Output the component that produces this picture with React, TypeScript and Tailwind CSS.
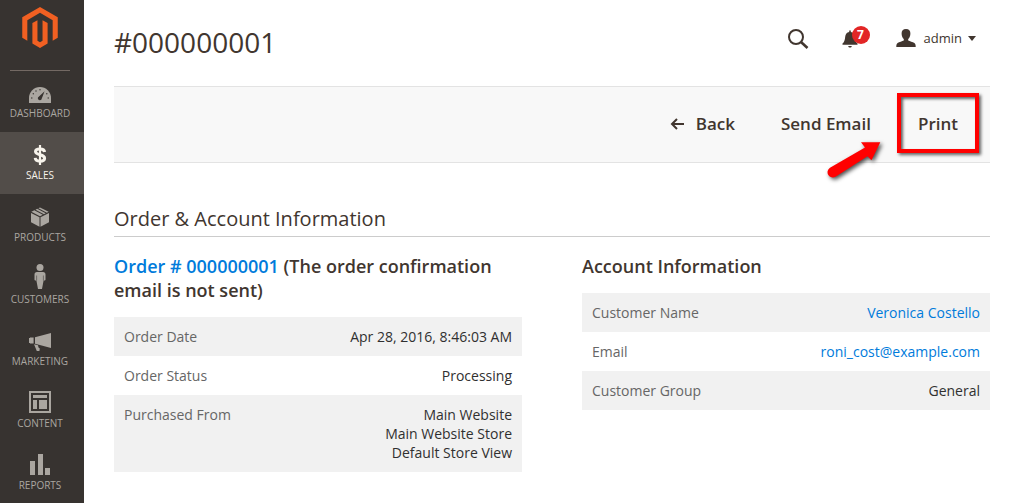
import React from 'react';
import type { ReactNode } from 'react';

interface MenuItem {
    label: string;
    icon: ReactNode;
    active?: boolean;
}

interface InfoRow {
    label: string;
    value: ReactNode;
}

const DashboardIcon = () => (
    <svg width="22" height="16" viewBox="0 0 22 16" fill="currentColor">
        <path d="M0 16V11a11 11 0 0 1 22 0v5z" />
        <g className="text-[#373330]">
            <path d="M15.600 4.200 12.800 11.400a2 2 0 1 1-2.800-1.900z" />
            <circle cx="2.800" cy="11" r="0.700" />
            <circle cx="4.300" cy="6.800" r="0.700" />
            <circle cx="7" cy="4" r="0.700" />
            <circle cx="11" cy="2.800" r="0.700" />
            <circle cx="17.800" cy="6.800" r="0.700" />
            <circle cx="19.200" cy="11" r="0.700" />
        </g>
    </svg>
);

const SalesIcon = () => (
    <svg width="14" height="20" viewBox="0 0 14 20" fill="none" stroke="currentColor">
        <path
            d="M11.600 7C11.400 4.900 9.800 3.900 7 3.900S2.500 4.900 2.500 6.600C2.500 8.600 4.500 9.200 7 9.800s4.600 1.300 4.600 3.500c0 1.800-1.700 2.900-4.600 2.900s-4.600-1.200-4.800-3.300"
            strokeWidth="3"
        />
        <path d="M7 0v20" strokeWidth="2.200" />
    </svg>
);

const ProductsIcon = () => (
    <svg width="20" height="20" viewBox="0 0 20 20" fill="currentColor">
        <path d="M1 5.900 9.500 10.200V19.800L1 15.200z" />
        <path d="M19 5.900 10.500 10.200V19.800L19 15.200z" />
        <path d="M1.400 4.800 4.300 3.300 12.800 7.800 10 9.200z" />
        <path d="M5.500 2.700 7.200 1.800 15.700 6.300 14 7.200z" />
        <path d="M8.400 1.200 10 .4 18.600 4.800 16.900 5.700z" />
    </svg>
);

const CustomersIcon = () => (
    <svg width="12" height="25" viewBox="0 0 12 25" fill="currentColor">
        <circle cx="6" cy="3.500" r="3.500" />
        <path d="M3 8h6c1.600 0 2.500 1 2.500 2.500V15.500c0 .7-.5 1-1.200 1H9.600L8 25H4L2.400 16.500H1.700C1 16.500.5 16.200.5 15.500v-5C.5 9 1.400 8 3 8z" />
        <path d="M2.600 11.500v5M9.400 11.500v5" stroke="#373330" strokeWidth="0.500" />
    </svg>
);

const MarketingIcon = () => (
    <svg width="22" height="18" viewBox="0 0 22 18" fill="currentColor">
        <path d="M22 0v15L6 10.800V4.300z" />
        <path d="M0 5h1V4.400h3.600v6.200H1V10H0z" />
        <path d="M5 11.200 9 12.300l.5 2.200 1.300 1-.4 2.500H7.800z" />
    </svg>
);

const ContentIcon = () => (
    <svg width="22" height="22" viewBox="0 0 22 22" fill="currentColor">
        <path d="M0 0h22v22H0zM2 2v18h18V2z" fillRule="evenodd" />
        <path d="M4 4h14v3H4zM4 9h4v9H4zM10 9h8v9h-8z" />
    </svg>
);

const ReportsIcon = () => (
    <svg width="20" height="21" viewBox="0 0 20 21" fill="currentColor">
        <path d="M0 7h5v14H0zM8 0h5v21H8zM15 14h5v7h-5z" />
    </svg>
);

const MagentoLogo = () => (
    <svg width="36" height="41" viewBox="1.600 0 20.800 24" fill="#f16022">
        <path d="M12 24l-4.455-2.572v-12l2.970-1.715v12.001l1.485.902 1.485-.902V7.713l2.971 1.715v12L12 24zM22.391 6v12l-2.969 1.714V7.713L12 3.430 4.574 7.713v12.001L1.609 18V6L12 0l10.391 6z" />
    </svg>
);

const SearchIcon = () => (
    <svg width="22" height="22" viewBox="0 0 22 22" fill="none" stroke="currentColor">
        <circle cx="9" cy="9" r="7" strokeWidth="2" />
        <path d="M14 14l6.500 6" strokeWidth="2.600" />
    </svg>
);

const BellIcon = () => (
    <svg width="16" height="18" viewBox="0 0 16 18" fill="currentColor">
        <path d="M7.200 .5h1.600v1.400c2.400.4 3.700 2.200 4 4.900.4 3.900 1 5.300 2.700 6.800v1.100H.5v-1.100c1.700-1.500 2.300-2.900 2.700-6.800.3-2.700 1.600-4.500 4-4.900z" />
        <path d="M6.200 15.900h3.600c-.2 1-.9 1.600-1.800 1.600s-1.600-.6-1.800-1.600z" />
    </svg>
);

const UserIcon = () => (
    <svg width="20" height="18" viewBox="0 0 20 18" fill="currentColor">
        <path d="M10 0c2.900 0 4.600 1.800 4.400 4.700-.1 2.600-1.100 4.300-2.200 5.300v1.600c1.500.9 4.600 1.400 6.200 2.500 1 .7 1.300 2 1.300 3.900H.3c0-1.900.3-3.200 1.300-3.900 1.600-1.100 4.700-1.600 6.200-2.500V10C6.700 9 5.700 7.300 5.600 4.700 5.400 1.800 7.100 0 10 0z" />
    </svg>
);

const BackIcon = () => (
    <svg width="14" height="12" viewBox="0 0 14 12" fill="none" stroke="currentColor" strokeWidth="2">
        <path d="M14 6H2M7 1 2 6l5 5" />
    </svg>
);

const menuItems: MenuItem[] = [
    { label: 'Dashboard', icon: <DashboardIcon /> },
    { label: 'Sales', icon: <SalesIcon />, active: true },
    { label: 'Products', icon: <ProductsIcon /> },
    { label: 'Customers', icon: <CustomersIcon /> },
    { label: 'Marketing', icon: <MarketingIcon /> },
    { label: 'Content', icon: <ContentIcon /> },
    { label: 'Reports', icon: <ReportsIcon /> },
];

const orderRows: InfoRow[] = [
    { label: 'Order Date', value: 'Apr 28, 2016, 8:46:03 AM' },
    { label: 'Order Status', value: 'Processing' },
    {
        label: 'Purchased From',
        value: (
            <>
                Main Website
                <br />
                Main Website Store
                <br />
                Default Store View
            </>
        ),
    },
];

const accountRows: InfoRow[] = [
    {
        label: 'Customer Name',
        value: (
            <a href="#customer" className="text-[#007bdb]">
                Veronica Costello
            </a>
        ),
    },
    {
        label: 'Email',
        value: (
            <a href="mailto:roni_cost@example.com" className="text-[#007bdb]">
                roni_cost@example.com
            </a>
        ),
    },
    { label: 'Customer Group', value: 'General' },
];

const InfoTable: React.FC<{ rows: InfoRow[] }> = ({ rows }) => (
    <table className="mt-[15px] w-full text-sm leading-[19px]">
        <tbody>
            {rows.map((row) => (
                <tr key={row.label} className="align-top odd:bg-[#f1f1f1]">
                    <th scope="row" className="p-2.5 text-left font-normal text-[#666]">
                        {row.label}
                    </th>
                    <td className="p-2.5 text-right text-[#303030]">{row.value}</td>
                </tr>
            ))}
        </tbody>
    </table>
);

const Sidebar = () => (
    <aside className="sticky top-0 h-screen w-[84px] shrink-0 overflow-hidden bg-[#373330]">
        <a
            href="#home"
            aria-label="Magento"
            className="mr-3.5 -mb-px ml-2.5 flex h-[71px] justify-center border-b border-[#736963] pt-[7px]"
        >
            <MagentoLogo />
        </a>
        <nav>
            {menuItems.map((item) => (
                <a
                    key={item.label}
                    href={`#${item.label.toLowerCase()}`}
                    className={`flex h-[62px] flex-col items-center gap-1 pr-1 text-[10px] leading-3 uppercase ${
                        item.active ? 'bg-[#524d49] text-[#f7f3eb]' : 'text-[#aaa6a0]'
                    }`}
                >
                    <span className="flex h-[33px] items-end justify-center">{item.icon}</span>
                    <span>{item.label}</span>
                </a>
            ))}
        </nav>
    </aside>
);

export default function App() {
    return (
        <div className="flex min-h-screen bg-white font-['Open_Sans',sans-serif] text-[#41362f]">
            <Sidebar />
            <main className="min-w-0 flex-1 pr-[26px] pl-[30px]">
                {/* Page header */}
                <header className="flex h-[86px] items-center justify-between pb-0.5">
                    <h1 className="text-[28px] leading-9">#000000001</h1>
                    <div className="flex items-center pr-3.5 pb-1.5">
                        <button type="button" aria-label="Search">
                            <SearchIcon />
                        </button>
                        <button type="button" aria-label="Notifications" className="relative ml-[33px]">
                            <BellIcon />
                            <span className="absolute -top-1 left-2.5 h-[18px] w-[18px] rounded-full bg-[#e22626] text-center text-xs leading-[18px] font-bold text-white">
                                7
                            </span>
                        </button>
                        <button type="button" className="ml-[38px] flex items-center pb-0.5 text-[13px] leading-4">
                            <UserIcon />
                            <span className="ml-2">admin</span>
                            <span className="ml-1.5 border-x-4 border-t-5 border-x-transparent border-t-[#41362f]" />
                        </button>
                    </div>
                </header>

                {/* Order actions */}
                <div className="relative flex h-[77px] items-center justify-end border-y border-[#e3e3e3] bg-[#f8f8f8] pr-[11px] pb-[3px] text-[17px] font-semibold">
                    <button type="button" className="flex items-center gap-3 pt-0.5">
                        <BackIcon />
                        Back
                    </button>
                    <button type="button" className="ml-[46px] pt-0.5">
                        Send Email
                    </button>
                    <button
                        type="button"
                        className="ml-[26px] h-[60px] border-4 border-[#f00] px-[17px] pt-0.5 shadow-[2px_2px_3px_rgba(0,0,0,0.6),inset_2px_2px_3px_rgba(0,0,0,0.6)]"
                    >
                        Print
                    </button>
                    <svg
                        className="absolute top-[49px] right-[102px] drop-shadow-[2px_2px_2px_rgba(0,0,0,0.7)]"
                        width="64"
                        height="46"
                        viewBox="0 0 64 46"
                        fill="#f00"
                        aria-hidden="true"
                    >
                        <path d="M37 6.300 56.300 6.300 47.500 24.300 43.500 20.200 11.500 40.700A5 5 0 0 1 6 31.800L41 11.500z" />
                    </svg>
                </div>

                <section>
                    <h2 className="mt-11 border-b border-[#ccc] pb-[5px] text-xl leading-6">Order &amp; Account Information</h2>
                    <div className="mt-[17px] grid grid-cols-2 items-start gap-15">
                        <div>
                            <h3 className="text-lg leading-6 font-semibold">
                                <a href="#order" className="text-[#007bdb]">
                                    Order # 000000001
                                </a>{' '}
                                (The order confirmation email is not sent)
                            </h3>
                            <InfoTable rows={orderRows} />
                        </div>
                        <div>
                            <h3 className="text-lg leading-6 font-semibold">Account Information</h3>
                            <InfoTable rows={accountRows} />
                        </div>
                    </div>
                </section>
            </main>
        </div>
    );
}
